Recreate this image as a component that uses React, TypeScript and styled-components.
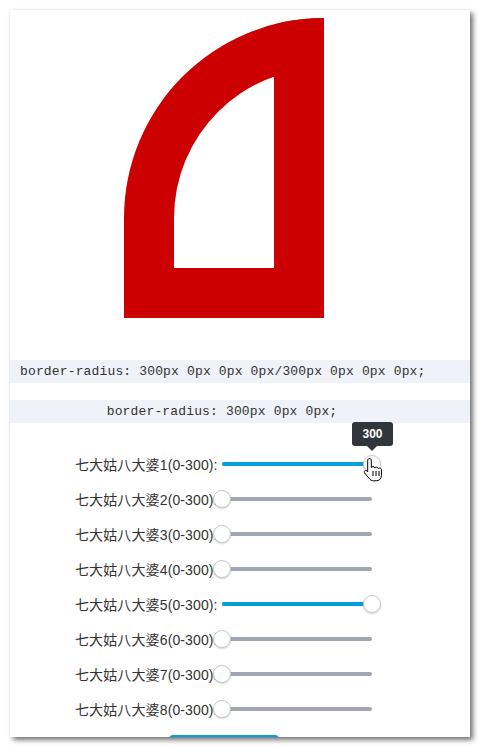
import React from "react";
import styled, { createGlobalStyle } from "styled-components";

const Global = createGlobalStyle`
  html, body { margin: 0; padding: 0; background: #ffffff; }
  body { width: 481px; height: 749px; overflow: hidden; }
`;

const Frame = styled.div`
  margin: 10px 0 0 10px;
  width: 460px;
  height: 727px;
  background: #fff;
  overflow: hidden;
  box-shadow: 0 0 1px rgba(0, 0, 0, 0.18), 3px 3px 5px rgba(0, 0, 0, 0.55);
  font-family: "Liberation Sans", "Noto Sans CJK SC", sans-serif;
  color: #333;
  display: flex;
  flex-direction: column;
`;

const Shape = styled.div`
  margin: 8px 0 0 114px;
  width: 100px;
  height: 200px;
  border: 50px solid #cc0000;
  border-radius: 300px 0px 0px 0px / 300px 0px 0px 0px;
  flex: none;
`;

const CodeBand = styled.div<{ $center?: boolean }>`
  margin-top: ${(p) => (p.$center ? "17px" : "42px")};
  height: 23px;
  line-height: 23px;
  background: #eff2f9;
  font-family: "Liberation Mono", monospace;
  font-size: 13px;
  letter-spacing: 0.15px;
  color: #333;
  white-space: pre;
  padding: ${(p) => (p.$center ? "0 36px 0 0" : "0 0 0 10px")};
  text-align: ${(p) => (p.$center ? "center" : "left")};
`;

const Sliders = styled.div`
  margin-top: 23px;
  display: flex;
  flex-direction: column;
`;

const Row = styled.div`
  height: 35px;
  display: flex;
  align-items: center;
  padding-left: 65px;
`;

const Label = styled.div`
  width: 138px;
  flex: none;
  white-space: nowrap;
  font-size: 14px;
  letter-spacing: 0.12px;
  color: #333;
`;

const SliderBox = styled.div`
  position: relative;
  width: 168px;
  height: 20px;
  flex: none;
`;

const Track = styled.div`
  position: absolute;
  left: 9px;
  right: 9px;
  top: 8px;
  height: 4px;
  border-radius: 2px;
  background: #a0a6b2;
`;

const Fill = styled.div`
  position: absolute;
  left: 9px;
  top: 8px;
  height: 4px;
  border-radius: 2px;
  background: #00a0dc;
`;

const Thumb = styled.div`
  position: absolute;
  top: 1px;
  width: 16px;
  height: 16px;
  border-radius: 50%;
  background: #fff;
  border: 1px solid #c9c9c9;
  box-shadow: 0 1px 2px rgba(0, 0, 0, 0.18);
`;

const Tooltip = styled.div`
  position: absolute;
  bottom: 28px;
  width: 41px;
  height: 24px;
  margin-left: -20px;
  background: #31363c;
  color: #fff;
  border-radius: 3px;
  font-size: 12px;
  font-weight: bold;
  line-height: 24px;
  text-align: center;
  &::after {
    content: "";
    position: absolute;
    left: 15px;
    top: 24px;
    border: 5px solid transparent;
    border-top-color: #31363c;
  }
`;

const Cursor = styled.svg`
  position: absolute;
  top: 3px;
  margin-left: -9px;
  width: 20px;
  height: 26px;
`;

const Button = styled.div`
  margin: 9px 0 0 159px;
  width: 110px;
  height: 30px;
  border-radius: 4px;
  background: #00a0dc;
  flex: none;
`;

type SliderProps = { value: number; tip?: boolean };

const Slider: React.FC<SliderProps> = ({ value, tip }) => {
  const pos = (value / 300) * 150;
  return (
    <SliderBox>
      <Track />
      <Fill style={{ width: pos }} />
      <Thumb style={{ left: pos }} />
      {tip && <Tooltip style={{ left: pos + 9 }}>300</Tooltip>}
      {tip && (
        <Cursor style={{ left: pos + 9 }} viewBox="0 0 20 26">
          <path
            d="M6.5 1.5c1 0 1.8.8 1.8 1.8v7.2c.3-.6 1-.9 1.7-.9 1 0 1.7.6 1.8 1.4.3-.5.9-.8 1.6-.8 1 0 1.7.7 1.8 1.5.3-.4.8-.6 1.4-.6 1 0 1.8.8 1.8 1.8v5.6c0 3.2-2.2 5.3-5.2 5.3h-2.6c-2 0-3.2-.8-4.3-2.3L1.6 16c-.6-.8-.4-1.8.3-2.3.7-.5 1.7-.3 2.2.4l.6.9V3.3c0-1 .8-1.8 1.8-1.8z"
            fill="#fff"
            stroke="#000"
            strokeWidth="1"
            strokeLinejoin="round"
          />
          <path d="M10 14v5M13 14v5M16 14v5" stroke="#000" strokeWidth="1" />
        </Cursor>
      )}
    </SliderBox>
  );
};

const rows = [
  { n: 1, v: 300, tip: true },
  { n: 2, v: 0 },
  { n: 3, v: 0 },
  { n: 4, v: 0 },
  { n: 5, v: 300 },
  { n: 6, v: 0 },
  { n: 7, v: 0 },
  { n: 8, v: 0 },
];

export default function App() {
  return (
    <>
      <Global />
      <Frame>
        <Shape />
        <CodeBand>border-radius: 300px 0px 0px 0px/300px 0px 0px 0px;</CodeBand>
        <CodeBand $center>border-radius: 300px 0px 0px;</CodeBand>
        <Sliders>
          {rows.map((r) => (
            <Row key={r.n}>
              <Label>七大姑八大婆{r.n}(0-300):</Label>
              <Slider value={r.v} tip={r.tip} />
            </Row>
          ))}
        </Sliders>
        <Button />
      </Frame>
    </>
  );
}
